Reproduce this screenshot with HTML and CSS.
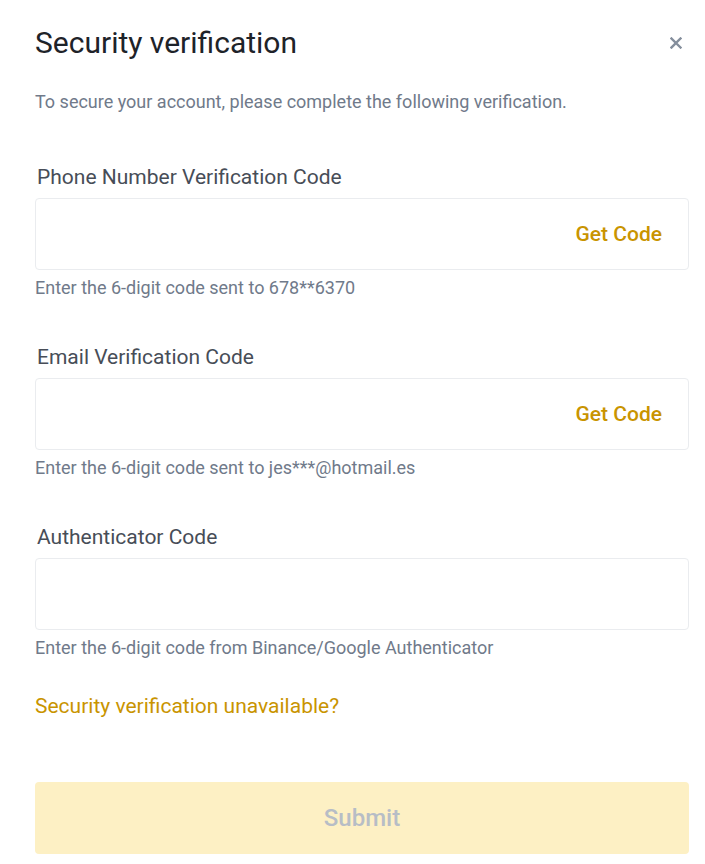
FILE: index.html
```html
<!DOCTYPE html>
<html>
<head>
<meta charset="utf-8">
<link rel="stylesheet" href="styles.css">
</head>
<body>
<div class="modal">
  <div class="header">
    <h1 class="title">Security verification</h1>
    <button class="close" aria-label="Close">
      <svg width="12" height="12" viewBox="0 0 12 12"><path d="M1.5 1.5L10.5 10.5M10.5 1.5L1.5 10.5" stroke="#848e9c" stroke-width="2.4" stroke-linecap="square"/></svg>
    </button>
  </div>
  <p class="subtitle">To secure your account, please complete the following verification.</p>

  <div class="field">
    <label class="label">Phone Number Verification Code</label>
    <div class="input"><span class="get">Get Code</span></div>
    <div class="hint">Enter the 6-digit code sent to 678**6370</div>
  </div>

  <div class="field">
    <label class="label">Email Verification Code</label>
    <div class="input"><span class="get">Get Code</span></div>
    <div class="hint">Enter the 6-digit code sent to jes***@hotmail.es</div>
  </div>

  <div class="field">
    <label class="label">Authenticator Code</label>
    <div class="input"></div>
    <div class="hint">Enter the 6-digit code from Binance/Google Authenticator</div>
  </div>

  <a class="unavail">Security verification unavailable?</a>

  <button class="submit">Submit</button>
</div>
</body>
</html>
```
FILE: styles.css
```css
* { box-sizing: border-box; }
html, body { margin: 0; padding: 0; background: #fff; }
body { font-family: Roboto, "Noto Sans", sans-serif; color: #1e2329; }
.modal { padding: 0 16px 0 35px; width: 705px; }
.header { display: flex; justify-content: space-between; align-items: center; height: 86px; }
.title { margin: 0; font-size: 30px; font-weight: 400; color: #1e2329; line-height: 40px; }
.close { border: 0; background: none; padding: 0; margin-right: 7px; width: 12px; height: 12px; display: flex; }
.subtitle { margin: 0; font-size: 18px; color: #707a8a; line-height: 32px; }
.field { margin-top: 45px; }
.field + .field { margin-top: 37px; }
.label { display: block; font-size: 21px; color: #474d57; padding-left: 2px; line-height: 28px; }
.input { margin-top: 7px; height: 72px; border: 1px solid #eaecef; border-radius: 4px; display: flex; align-items: center; justify-content: flex-end; padding-right: 26px; }
.get { font-size: 21px; font-weight: 500; color: #c99400; }
.hint { font-size: 18px; color: #707a8a; line-height: 36px; }
.unavail { display: block; margin-top: 26px; font-size: 21px; color: #c99400; line-height: 28px; }
.submit { display: block; margin-top: 62px; width: 654px; height: 72px; border: 0; border-radius: 4px; background: #fdf0c4; color: #b7bdc6; font-family: inherit; font-size: 24px; font-weight: 500; }
```
